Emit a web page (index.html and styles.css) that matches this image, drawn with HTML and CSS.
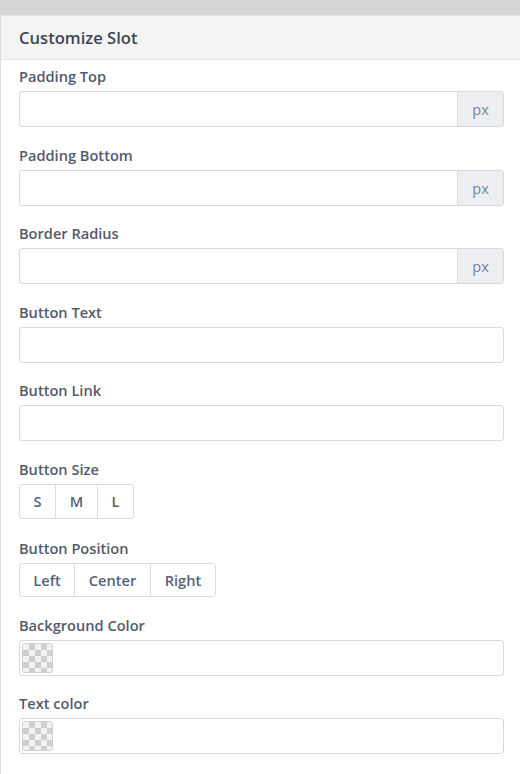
FILE: index.html
```html
<!DOCTYPE html>
<html>
<head>
<meta charset="utf-8">
<link rel="stylesheet" href="styles.css">
</head>
<body>
<div class="topbar"></div>
<div class="panel">
  <div class="panel-header">Customize Slot</div>
  <div class="panel-body">
    <div class="field">
      <label class="label">Padding Top</label>
      <div class="input-group"><input class="input" type="text"><span class="addon">px</span></div>
    </div>
    <div class="field">
      <label class="label">Padding Bottom</label>
      <div class="input-group"><input class="input" type="text"><span class="addon">px</span></div>
    </div>
    <div class="field">
      <label class="label">Border Radius</label>
      <div class="input-group"><input class="input" type="text"><span class="addon">px</span></div>
    </div>
    <div class="field">
      <label class="label">Button Text</label>
      <div class="input-group"><input class="input" type="text"></div>
    </div>
    <div class="field">
      <label class="label">Button Link</label>
      <div class="input-group"><input class="input" type="text"></div>
    </div>
    <div class="field field-size">
      <label class="label">Button Size</label>
      <div class="btn-group">
        <span class="btn btn-s">S</span><span class="btn btn-m">M</span><span class="btn btn-l">L</span>
      </div>
    </div>
    <div class="field field-position">
      <label class="label">Button Position</label>
      <div class="btn-group">
        <span class="btn btn-left">Left</span><span class="btn btn-center">Center</span><span class="btn btn-right">Right</span>
      </div>
    </div>
    <div class="field">
      <label class="label">Background Color</label>
      <div class="input-group color"><span class="swatch"></span></div>
    </div>
    <div class="field">
      <label class="label">Text color</label>
      <div class="input-group color"><span class="swatch"></span></div>
    </div>
  </div>
</div>
</body>
</html>
```
FILE: styles.css
```css
html, body {
  margin: 0;
  padding: 0;
  background: #ffffff;
  font-family: "Open Sans", "Liberation Sans", sans-serif;
}
.topbar {
  height: 15px;
  background: #d6d6d6;
}
.panel {
  border-left: 1px solid #dcdcdc;
  border-top: 1px solid #e6e6e6;
  min-height: 758px;
}
.panel-header {
  height: 43px;
  line-height: 44px;
  background: #f4f4f4;
  border-bottom: 1px solid #e6e6e6;
  padding-left: 18px;
  font-size: 16.6px;
  font-weight: 600;
  color: #3f4653;
}
.panel-body {
  padding: 6px 16px 0 18px;
}
.field {
  margin-bottom: 17.5px;
}
.field-size {
  margin-bottom: 19px;
}
.field-position {
  margin-bottom: 18px;
}
.field-position .btn-group {
  height: 34px;
}
.label {
  display: block;
  font-size: 14.6px;
  font-weight: 600;
  line-height: 20px;
  margin-bottom: 5px;
  color: #535b6b;
}
.input-group {
  display: flex;
  height: 36px;
  box-sizing: border-box;
  border: 1px solid #d9d9d9;
  border-radius: 3px;
  overflow: hidden;
  background: #fff;
}
.input {
  flex: 1;
  border: 0;
  outline: none;
  padding: 0 10px;
  margin: 0;
  font-family: inherit;
  font-size: 14px;
  background: transparent;
  min-width: 0;
}
.addon {
  width: 45px;
  display: flex;
  align-items: center;
  justify-content: center;
  background: #eceef1;
  border-left: 1px solid #dcdcdc;
  font-size: 14.6px;
  color: #7b8190;
}
.btn-group {
  display: inline-flex;
  height: 35px;
  box-sizing: border-box;
  border: 1px solid #dcdcdc;
  border-radius: 3px;
  background: #fff;
}
.btn {
  display: flex;
  align-items: center;
  justify-content: center;
  font-size: 14.6px;
  font-weight: 600;
  color: #586275;
}
.btn + .btn {
  border-left: 1px solid #dcdcdc;
}
.btn-s { width: 35px; }
.btn-m { width: 41px; }
.btn-l { width: 35px; }
.btn-left { width: 54px; }
.btn-center { width: 75px; }
.btn-right { width: 64px; }
.color {
  align-items: center;
  padding-left: 2px;
}
.swatch {
  width: 31px;
  height: 30px;
  box-sizing: border-box;
  border: 1px solid #d0d0d0;
  border-radius: 3px;
  background-color: #f2f2f2;
  background-image:
    linear-gradient(45deg, #cfcfcf 25%, transparent 25%, transparent 75%, #cfcfcf 75%),
    linear-gradient(45deg, #cfcfcf 25%, transparent 25%, transparent 75%, #cfcfcf 75%);
  background-size: 12px 12px;
  background-position: 0 0, 6px 6px;
}
```
